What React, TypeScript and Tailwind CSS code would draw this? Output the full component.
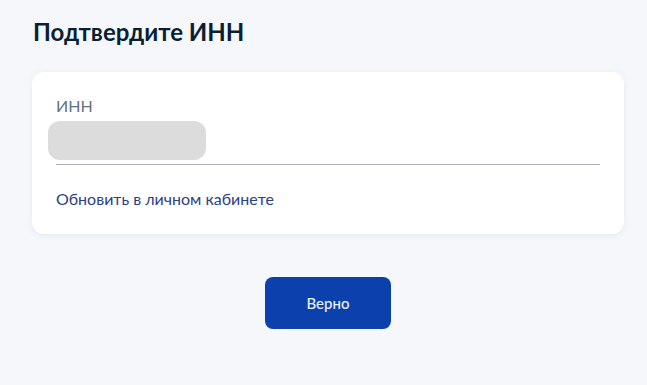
import React from 'react';

export default function App() {
  return (
    <div
      className="min-h-[385px] w-full bg-[#f5f7fb] px-8 pt-[17px]"
      style={{ fontFamily: 'Lato, "Noto Sans", sans-serif' }}
    >
      <h1 className="pl-px text-[24px] font-bold leading-[30px] text-[#0b1f33]">Подтвердите ИНН</h1>

      <div className="mt-[25px] w-[592px] rounded-xl bg-white px-6 pt-[24px] pb-[25px] shadow-[0_1px_6px_rgba(150,170,200,0.18)]">
        <p className="text-[16px] leading-5 text-[#66727f]">ИНН</p>
        <div className="mt-[5px] border-b border-[#a9b0b8] pb-[4px]">
          <div className="-ml-2 h-[39px] w-[158px] rounded-xl bg-[#dcdcdc]" />
        </div>
        <a href="#" className="mt-[24px] block text-[16px] leading-5 text-[#2c4185]">
          Обновить в личном кабинете
        </a>
      </div>

      <div className="mt-[43px] flex w-[592px] justify-center">
        <button className="h-[52px] w-[126px] rounded-lg bg-[#0b40ad] text-[15px] font-medium text-[#eaf2ff]">
          Верно
        </button>
      </div>
    </div>
  );
}
